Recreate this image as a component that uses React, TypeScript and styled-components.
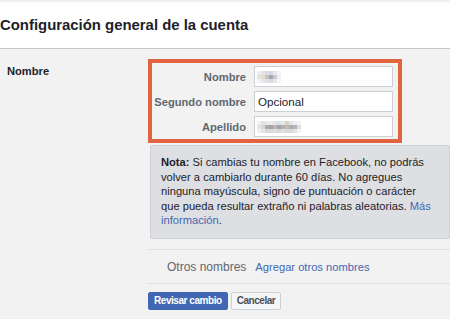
import React from "react";
import styled, { createGlobalStyle } from "styled-components";

const Global = createGlobalStyle`
  html, body { margin: 0; padding: 0; background: #f2f2f2; }
  body { font-family: "Liberation Sans", Arial, Helvetica, sans-serif; color: #1d2129; }
  * { box-sizing: border-box; }
`;

const Page = styled.div`
  width: 450px;
  height: 319px;
  overflow: hidden;
  background: #f2f2f2;
`;

const Header = styled.div`
  height: 49px;
  padding-top: 16px;
  background: linear-gradient(#ebebeb 0px, #f7f7f7 2px, #ffffff 4px);
  border-bottom: 1px solid #c6c6c6;
`;

const Title = styled.h2`
  margin: 0;
  font-size: 14.9px;
  line-height: 18px;
  font-weight: bold;
  color: #1d2129;
`;

const Section = styled.div`
  display: grid;
  grid-template-columns: 148px 302px;
  padding-top: 10px;
`;

const SideLabel = styled.div`
  padding: 5px 0 0 7px;
  font-size: 11.16px;
  line-height: 14px;
  font-weight: bold;
  color: #1d2129;
`;

const Column = styled.div`
  display: flex;
  flex-direction: column;
`;

const Highlight = styled.div`
  width: 254px;
  border: 4px solid #df643f;
  padding: 3px 5px 2px 0;
  display: grid;
  grid-template-columns: 94px 139px;
  column-gap: 8px;
  row-gap: 4px;
  align-items: center;
`;

const FieldLabel = styled.label`
  text-align: right;
  font-size: 11.16px;
  font-weight: bold;
  color: #606770;
  white-space: nowrap;
`;

const Field = styled.div`
  height: 21px;
  background: #fff;
  border: 1px solid #ccd0d5;
  padding-left: 3px;
  display: flex;
  align-items: center;
  font-size: 11.6px;
  color: #1d2129;
`;

const Blur = styled.div<{ $cols: number }>`
  display: grid;
  grid-template-columns: repeat(${(p) => p.$cols}, 4px);
  grid-auto-rows: 4px;
  margin-left: -1px;
`;

const Cell = styled.span<{ $c: string }>`
  background: ${(p) => p.$c};
`;

const Note = styled.div`
  margin: 2px 0 0 2px;
  width: 300px;
  background: #dddfe2;
  border: 1px solid #ccd0d5;
  border-radius: 2px;
  padding: 9px 8px 10px 10px;
  font-size: 11.16px;
  line-height: 14.5px;
  color: #1d2129;
  white-space: nowrap;
`;

const Strong = styled.b`
  font-weight: bold;
`;

const Link = styled.a`
  color: #4267b2;
  text-decoration: none;
  cursor: pointer;
`;

const OtherRow = styled.div`
  margin-top: 10px;
  height: 35px;
  border-top: 1px solid #dddfe2;
  border-bottom: 1px solid #dddfe2;
  display: flex;
  align-items: center;
  gap: 9px;
  padding: 2px 0 0 19px;
`;

const OtherLabel = styled.span`
  font-size: 12px;
  color: #606770;
`;

const OtherLink = styled(Link)`
  font-size: 11.16px;
`;

const Actions = styled.div`
  margin-top: 8px;
  display: flex;
  gap: 3px;
`;

const Button = styled.button<{ $primary?: boolean }>`
  height: 18px;
  padding: 0 5px;
  border: 1px solid ${(p) => (p.$primary ? "#4267b2" : "#ccd0d5")};
  background: ${(p) => (p.$primary ? "#4267b2" : "#f5f6f7")};
  color: ${(p) => (p.$primary ? "#ffffff" : "#4b4f56")};
  font-family: "Liberation Sans", Arial, sans-serif;
  font-size: 10px;
  font-weight: bold;
  letter-spacing: -0.45px;
  border-radius: 2px;
  line-height: 16px;
  cursor: pointer;
`;

const firstName = [
  ["#eceef0", "#e3e4e8", "#dcdde2", "#d7d8dd", "#e8e9ec", "#f4f4f5"],
  ["#e6e2dd", "#e9dccb", "#c6c3c4", "#a6a8b0", "#c9cacf", "#eeeeef"],
  ["#eef0f1", "#e6e7ea", "#dfe0e3", "#d9dadf", "#e6e7ea", "#f6f6f7"],
];

const lastName = [
  ["#eef0f1", "#dfe1e4", "#e9eaec", "#eceef0", "#e3e4e7", "#dfe0e4", "#e6e7ea", "#d8d2cb", "#e4e5e8", "#eceef0", "#f3f3f4"],
  ["#e2e4e6", "#d6d8dc", "#b4a9a6", "#a8a2a6", "#c0b8b6", "#9ea4ab", "#b9b0ab", "#c8bca8", "#a9adb5", "#b8b3b8", "#e0dde0"],
  ["#f0f1f2", "#e4e6e8", "#d5d6da", "#dadbdf", "#e0dcdb", "#d6d8dc", "#e2e0df", "#dad8d2", "#d8dade", "#e4e4e7", "#f4f4f5"],
];

function Pixels({ rows }: { rows: string[][] }) {
  return (
    <Blur $cols={rows[0].length}>
      {rows.flat().map((c, i) => (
        <Cell key={i} $c={c} />
      ))}
    </Blur>
  );
}

export default function App() {
  return (
    <Page>
      <Global />
      <Header>
        <Title>Configuración general de la cuenta</Title>
      </Header>
      <Section>
        <SideLabel>Nombre</SideLabel>
        <Column>
          <Highlight>
            <FieldLabel>Nombre</FieldLabel>
            <Field>
              <Pixels rows={firstName} />
            </Field>
            <FieldLabel>Segundo nombre</FieldLabel>
            <Field>Opcional</Field>
            <FieldLabel>Apellido</FieldLabel>
            <Field>
              <Pixels rows={lastName} />
            </Field>
          </Highlight>
          <Note>
            <Strong>Nota:</Strong> Si cambias tu nombre en Facebook, no podrás
            <br />
            volver a cambiarlo durante 60 días. No agregues
            <br />
            ninguna mayúscula, signo de puntuación o carácter
            <br />
            que pueda resultar extraño ni palabras aleatorias. <Link>Más</Link>
            <br />
            <Link>información</Link>.
          </Note>
          <OtherRow>
            <OtherLabel>Otros nombres</OtherLabel>
            <OtherLink>Agregar otros nombres</OtherLink>
          </OtherRow>
          <Actions>
            <Button $primary>Revisar cambio</Button>
            <Button>Cancelar</Button>
          </Actions>
        </Column>
      </Section>
    </Page>
  );
}
